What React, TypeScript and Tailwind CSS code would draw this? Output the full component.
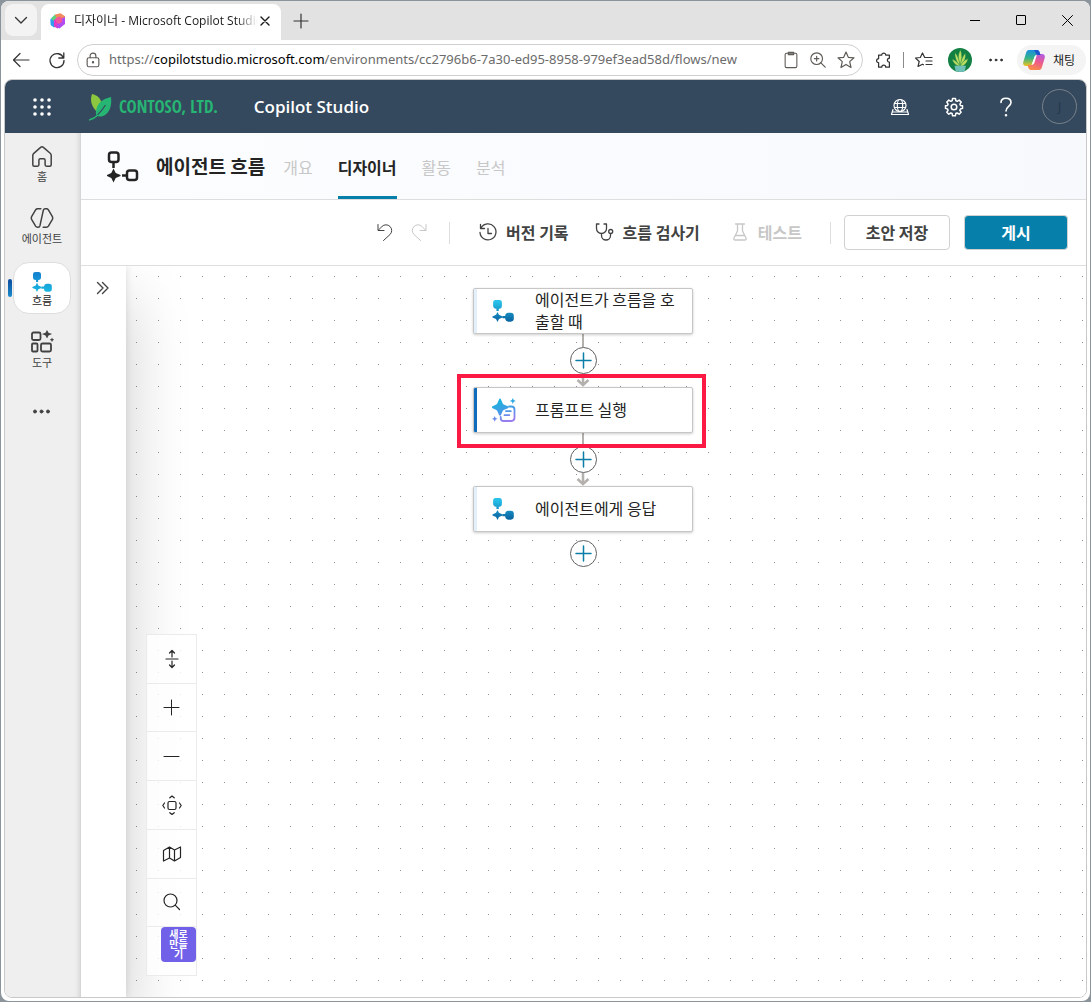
import { useState } from "react";
import type { ReactNode } from "react";

type IconProps = {
  size?: number;
  box?: string;
  width?: number;
  className?: string;
  children: ReactNode;
};

// thin outline icon wrapper
function Icon({ size = 20, box = "0 0 20 20", width = 1, className = "", children }: IconProps) {
  return (
    <svg
      width={size}
      height={size}
      viewBox={box}
      fill="none"
      stroke="currentColor"
      strokeWidth={width}
      strokeLinecap="round"
      strokeLinejoin="round"
      className={`shrink-0 ${className}`}
      aria-hidden="true"
    >
      {children}
    </svg>
  );
}

function FlowIcon({ size = 24, from, to, id }: { size?: number; from: string; to: string; id: string }) {
  return (
    <svg width={size} height={size} viewBox="0 0 24 24" className="shrink-0" aria-hidden="true">
      <defs>
        <linearGradient id={id} x1="0" y1="0" x2="0" y2="24" gradientUnits="userSpaceOnUse">
          <stop offset="0.1" stopColor={from} />
          <stop offset="0.9" stopColor={to} />
        </linearGradient>
      </defs>
      <g fill={`url(#${id})`}>
        <path d="M4 0h4a2.800 2.800 0 0 1 2.800 2.800v3.600A3.200 3.200 0 0 1 7.400 9.600V12H4.800V9.600A3.200 3.200 0 0 1 1.200 6.400V2.800A2.800 2.800 0 0 1 4 0Z" />
        <path d="M6 13l1.600 3.200 3.900 1.700v1.200l-3.900 1.600L6 24l-1.600-3.300L.500 19.100v-1.200l3.900-1.700Z" />
        <path d="M11.300 17.400h3.100A3.600 3.600 0 0 1 17.700 14H20.500a3.300 3.300 0 0 1 3.300 3.300v3a3.300 3.300 0 0 1-3.300 3.300h-2.800a3.600 3.600 0 0 1-3.300-3.600h-3.100Z" />
      </g>
    </svg>
  );
}

function PromptIcon() {
  return (
    <svg width="24" height="24" viewBox="0 0 24 24" className="shrink-0" aria-hidden="true">
      <defs>
        <linearGradient id="prompt" x1="4" y1="1" x2="12" y2="24" gradientUnits="userSpaceOnUse">
          <stop offset="0.1" stopColor="#17b3dc" />
          <stop offset="0.6" stopColor="#4a9ae8" />
          <stop offset="1" stopColor="#9a7bf0" />
        </linearGradient>
      </defs>
      <path
        d="M17 8.500h2.300a3.200 3.200 0 0 1 3.200 3.200v8.100a3.200 3.200 0 0 1-3.200 3.200H11.500a2.800 2.800 0 0 1-2.800-2.800V19M14 13.200h4.800M12.500 17.200h4.800"
        fill="none"
        stroke="url(#prompt)"
        strokeWidth="1.800"
        strokeLinecap="round"
      />
      <g fill="url(#prompt)">
        <path d="M8 .600c.500 0 .800.300 1 .800l1.700 4c.200.500.500.800 1 1l4.200 1.800c1 .400 1 1.600 0 2l-4.200 1.800c-.500.200-.800.500-1 1l-1.700 4c-.400 1-1.600 1-2 0l-1.700-4c-.200-.500-.500-.800-1-1L.600 10.200c-1-.400-1-1.600 0-2l3.700-1.800c.500-.200.800-.500 1-1l1.700-4c.200-.500.500-.800 1-.800Z" />
        <path d="M20.800 0l.900 2 2.100.900-2.100.900-.900 2.200-.900-2.200-2.100-.900 2.100-.900Z" />
        <path d="M2.700 18l.900 1.900 1.900.800-1.900 1-.900 2.100-.900-2.100-1.900-1 1.900-.800Z" />
      </g>
    </svg>
  );
}

function CopilotTabIcon() {
  return (
    <svg width="16" height="16" viewBox="0 0 16 16" className="shrink-0" aria-hidden="true">
      <path d="M.500 6L5 2l4 2-1 9L4 14.500.800 12Z" fill="#3bb8e8" />
      <path d="M5 1.500L10.500.300l4.500 3V7.500L9 10 3 6Z" fill="#f28b5b" />
      <path d="M3 7l4-2 5 2v5l-4.500 3.500L4 13.500Z" fill="#e33bc4" />
      <path d="M8 7L15 4v7L9.500 15.500 6.500 14Z" fill="#b04df0" />
      <path d="M.500 6.500L4 7.500v6.800L.800 12Z" fill="#2f9cf0" />
      <path d="M6 5l3-1.500L12 5v4L8.500 11 6 9Z" fill="#f0569c" />
      <path d="M1.500 5L5 1.800l1.500 3L3 8Z" fill="#5fd07c" />
    </svg>
  );
}

function CopilotIcon() {
  return (
    <svg width="22" height="20" viewBox="0 0 22 20" className="shrink-0" aria-hidden="true">
      <defs>
        <linearGradient id="cpA" x1="4" y1="0" x2="4" y2="16" gradientUnits="userSpaceOnUse">
          <stop offset="0" stopColor="#1a8fe0" />
          <stop offset="0.5" stopColor="#33b28a" />
          <stop offset="1" stopColor="#f0c31c" />
        </linearGradient>
        <linearGradient id="cpB" x1="18" y1="4" x2="12" y2="20" gradientUnits="userSpaceOnUse">
          <stop offset="0" stopColor="#b45be0" />
          <stop offset="0.5" stopColor="#ee5a8c" />
          <stop offset="1" stopColor="#f98a4b" />
        </linearGradient>
      </defs>
      <path d="M6 0h8c1.500 0 2.200 1 2.700 2.500L17.500 5H14c-1.500 0-2.200 1-2.700 2.500L9 14.500c-.500 1.300-1 1.500-2 1.500H3C.500 16-.300 14 .300 12L3 3C3.500 1 4.500 0 6 0Z" fill="url(#cpA)" />
      <path d="M16 20H8c-1.500 0-2.200-1-2.700-2.500L4.600 15H8c1.500 0 2.200-1 2.700-2.500L13 5.500C13.500 4.200 14 4 15 4h4c2.500 0 3.300 2 2.700 4L19 17c-.500 2-1.500 3-3 3Z" fill="url(#cpB)" />
      <path d="M11 0h3c1.500 0 2.200 1 2.700 2.500L17.500 5H14Z" fill="#1e56cf" />
      <path d="M11.300 7.500C11.800 6 12.500 5 13.800 5L11.500 12.500C11 14 9.800 15 8.500 15Z" fill="#fff" />
    </svg>
  );
}

function PlantAvatar() {
  return (
    <svg width="24" height="24" viewBox="0 0 24 24" className="shrink-0" aria-hidden="true">
      <circle cx="12" cy="12" r="12" fill="#138043" />
      <g fill="#b9dc63" stroke="#138043" strokeWidth="0.500">
        <path d="M11.300 18C9.500 11 10 6 12.500 1.500 14.500 7 14 12 12.800 18Z" />
        <path d="M11.500 18C8 13 6.500 9 7 4.500 10 8 11.500 12 12 18Z" />
        <path d="M12.200 18c.500-5 2-9.500 5.300-13 .500 5-1.200 9.500-4.500 13Z" />
        <path d="M11.500 18.500C8 17.500 5 15 4 11 8 12.500 10.500 15 12 18.500Z" />
        <path d="M12.200 18.500c1.500-4 4-6.500 8-8-1 4.500-3.500 7-7 8Z" />
      </g>
      <path d="M6.500 17.800h11.500l-1.300 5.200a12 12 0 0 1-9 0Z" fill="#6fc0b8" />
    </svg>
  );
}

function ContosoLeaf() {
  return (
    <svg width="23" height="28" viewBox="0 0 23 28" className="shrink-0" aria-hidden="true">
      <path d="M3 1c5 1 9 4 9.500 10L10 17.500 8 19C3 14 .500 8 3 1Z" fill="#8dc63f" />
      <path d="M22 4c1 8-1 16-8 19-2.500 1-5 .500-7-.500C6 12 12 6 22 4Z" fill="#27b573" />
      <path d="M0 27c7-2 12-8 16.500-15" fill="none" stroke="#34495e" strokeWidth="1.200" />
      <path d="M0 27c4-1 7-3 9-5" fill="none" stroke="#27b573" strokeWidth="1.500" />
    </svg>
  );
}

function GearIcon() {
  return (
    <Icon size={20} width={1.5}>
      <path d="M8.600 1.500h2.800l.500 2.300 1.300.500 2-1.200 2 2-1.300 2 .600 1.300 2 .400v2.600l-2.100.600-.600 1.300 1.300 1.900-2 2-2-1.200-1.300.500-.400 2.300H8.600l-.500-2.300-1.300-.500-2 1.200-2-2 1.300-1.900-.600-1.300-2-.600V8.800l2-.400.600-1.300-1.300-2 2-2 2 1.200 1.300-.500Z" />
      <circle cx="10" cy="10" r="2.800" />
    </Icon>
  );
}

// --- left rail -------------------------------------------------------------

const navItems = [
  {
    label: "홈",
    icon: (
      <Icon size={24} box="0 0 24 24" width={1.5}>
        <path d="M2.800 11.300c0-.900.400-1.500 1-2L10.600 3.400a2.100 2.100 0 0 1 2.800 0l6.800 5.900c.600.500 1 1.100 1 2v9.400c0 .900-.600 1.500-1.500 1.500h-3.200c-.900 0-1.400-.600-1.400-1.400v-4.600c0-.800-.500-1.400-1.400-1.400h-3.400c-.900 0-1.400.600-1.400 1.400v4.600c0 .800-.500 1.400-1.400 1.400H4.300c-.900 0-1.500-.600-1.500-1.500Z" />
      </Icon>
    ),
  },
  {
    label: "에이전트",
    icon: (
      <Icon size={24} box="0 0 24 24" width={1.5}>
        <path d="M10.800 2.800H7.600c-.900 0-1.500.300-2 1.100L1.600 10.700c-.500.900-.500 1.700 0 2.600l4 6.800c.500.800 1.100 1.100 2 1.100h.600c.900 0 1.500-.500 1.700-1.300L13.300 4.300c.300-1 .900-1.500 1.900-1.500h1.200c.900 0 1.500.300 2 1.100l4 6.800c.500.900.500 1.700 0 2.600l-4 6.800c-.500.800-1.100 1.100-2 1.100h-3.200" />
      </Icon>
    ),
  },
  { label: "흐름", icon: <FlowIcon id="navFlow" size={20} from="#1583cf" to="#19b4e0" /> },
  {
    label: "도구",
    icon: (
      <Icon size={24} box="0 2 24 24" width={1.8}>
        <rect x="2" y="4.500" width="8.500" height="7.500" rx="1.500" />
        <rect x="2" y="15.500" width="5.500" height="8" rx="1" />
        <rect x="11" y="15.500" width="10" height="8" rx="1.500" />
        <path
          d="M17 2l1.500 2.700 3.600 1.400-3.600 1.400L17 10.500l-1.500-3-3.600-1.400 3.600-1.400ZM22 9.500l.700 1.500 1.700.700-1.700.700-.700 1.900-.700-1.900-1.700-.700 1.700-.700Z"
          fill="currentColor"
          stroke="none"
        />
      </Icon>
    ),
  },
];

function SideNav() {
  const [active, setActive] = useState("흐름");

  return (
    <nav className="flex w-[76px] shrink-0 flex-col items-center border-r border-[#d6d6d6] bg-[#efefef] pr-px text-[#424242] shadow-[inset_-5px_0_5px_-4px_rgba(0,0,0,0.12)]">
      {navItems.map((item) => (
        <div key={item.label} className="relative flex h-[62px] w-full items-center justify-center">
          {item.label === active && (
            <span className="absolute left-[3px] h-[18px] w-1 rounded-full bg-linear-to-b from-[#0f4c9e] to-[#1a8ccb]" />
          )}
          <button
            type="button"
            onClick={() => setActive(item.label)}
            className={`flex h-[52px] w-[58px] flex-col items-center justify-center rounded-2xl border ${
              item.label === active ? "border-[#dedede] bg-white text-[#242424]" : "border-transparent"
            }`}
          >
            <span className="flex h-6 items-end">{item.icon}</span>
            <span className="text-[11px] leading-4">{item.label}</span>
          </button>
        </div>
      ))}
      <button type="button" aria-label="More" className="flex h-[62px] w-full items-center justify-center">
        <Icon size={20} className="fill-current">
          <circle cx="3" cy="9.500" r="1.500" />
          <circle cx="9.500" cy="9.500" r="1.500" />
          <circle cx="16" cy="9.500" r="1.500" />
        </Icon>
      </button>
    </nav>
  );
}

// --- flow designer ---------------------------------------------------------

function PlusButton() {
  return (
    <button
      type="button"
      aria-label="Add action"
      className="flex size-[27px] items-center justify-center rounded-full border border-[#616161] bg-white text-[#0a7ea8]"
    >
      <Icon size={17} box="0 0 17 17" width={1.5}>
        <path d="M8.500 1v15M1 8.500h15" />
      </Icon>
    </button>
  );
}

function Connector() {
  return (
    <div className="flex flex-col items-center">
      <span className="h-[13px] w-0.5 bg-[#b3b0ad]" />
      <PlusButton />
      <svg width="14" height="13" viewBox="0 0 14 13" fill="none" stroke="#b3b0ad" strokeWidth="2.500" aria-hidden="true">
        <path d="M7 0v11M1.500 6L7 11l5.500-5" />
      </svg>
    </div>
  );
}

type NodeProps = {
  title: string;
  icon: ReactNode;
  selected?: boolean;
};

function FlowNode({ title, icon, selected }: NodeProps) {
  return (
    <div className="relative">
      <button
        type="button"
        className="flex h-[46px] w-[220px] items-center overflow-hidden rounded-xs border border-[#c8c6c4] bg-white text-left shadow-[0_1px_3px_rgba(0,0,0,0.2)]"
      >
        <span className={`h-full w-[3px] shrink-0 ${selected ? "bg-[#0f6cbd]" : "bg-[#e3effb]"}`} />
        <span className="ml-[15px] flex w-[43px] shrink-0">{icon}</span>
        <span className="w-[142px] pb-0.5 leading-[22px] text-[#242424]">{title}</span>
      </button>
      {selected && (
        <span className="pointer-events-none absolute -top-[13px] -right-[13px] -bottom-[15px] -left-4 border-4 border-[#fb1a43]" />
      )}
    </div>
  );
}

const controls = [
  {
    label: "Collapse",
    icon: (
      <Icon size={20} width={1.2}>
        <path d="M4 10h12M10 8V1.500M7.500 4L10 1.500 12.500 4M10 12v6.500M7.500 16l2.500 2.500 2.500-2.500" />
      </Icon>
    ),
  },
  {
    label: "Zoom in",
    icon: (
      <Icon size={17} box="0 0 17 17">
        <path d="M8.500 1v15M1 8.500h15" />
      </Icon>
    ),
  },
  {
    label: "Zoom out",
    icon: (
      <Icon size={17} box="0 0 17 17">
        <path d="M1 8.500h15" />
      </Icon>
    ),
  },
  {
    label: "Fit view",
    icon: (
      <Icon size={20} width={1.2}>
        <rect x="6" y="6.500" width="8" height="8" rx="1.500" />
        <path d="M7.800 2.800L10 1l2.200 1.800M7.800 17.700l2.200 1.800 2.200-1.800M2.500 8L.800 10.500 2.500 13M17.500 8l1.700 2.500-1.700 2.500" />
      </Icon>
    ),
  },
  {
    label: "Minimap",
    icon: (
      <Icon size={20} width={1.2}>
        <path d="M1.500 6.500L7.500 3l5 3L18.500 3v10.500L12.500 17l-5-3-6 3ZM7.500 3v11M12.500 6v11" />
      </Icon>
    ),
  },
  {
    label: "Search",
    icon: (
      <Icon size={20} width={1.2}>
        <circle cx="8.500" cy="8.500" r="6.500" />
        <path d="M13.200 13.200L17.500 17.500" />
      </Icon>
    ),
  },
];

function Canvas() {
  return (
    <div className="relative flex-1 overflow-hidden bg-white">
      <svg className="absolute inset-0 h-full w-full" aria-hidden="true">
        <pattern id="dots" width="22" height="22" patternUnits="userSpaceOnUse">
          <rect x="11" y="10" width="1" height="1" fill="#91919a" />
        </pattern>
        <rect width="100%" height="100%" fill="url(#dots)" />
      </svg>

      {/* collapsed side panel lies over the canvas */}
      <div className="absolute inset-y-0 left-0 flex w-[45px] justify-center bg-white pt-3 pr-0.5 shadow-[0_0_8px_rgba(0,0,0,0.12),0_32px_64px_rgba(0,0,0,0.22)]">
        <button type="button" aria-label="Expand panel" className="h-5 text-[#424242]">
          <Icon size={20} width={1.4}>
            <path d="M4.500 4.500L10 10l-5.500 5.500M9.500 4.500L15 10l-5.500 5.500" />
          </Icon>
        </button>
      </div>

      <div className="relative flex flex-col items-center pt-[22px] pr-px">
        <FlowNode title="에이전트가 흐름을 호출할 때" icon={<FlowIcon id="flowA" size={22} from="#27c0e8" to="#0b6aa6" />} />
        <Connector />
        <div className="z-10">
          <FlowNode title="프롬프트 실행" icon={<PromptIcon />} selected />
        </div>
        <Connector />
        <FlowNode title="에이전트에게 응답" icon={<FlowIcon id="flowB" size={22} from="#27c0e8" to="#0b6aa6" />} />
        <div className="mt-2">
          <PlusButton />
        </div>
      </div>

      <div className="absolute bottom-[21px] left-[65px] flex h-[342px] w-[51px] flex-col border border-[#ebebeb] bg-white/80 text-[#242424]">
        {controls.map((c) => (
          <button
            key={c.label}
            type="button"
            aria-label={c.label}
            className="flex w-full flex-1 items-center justify-center border-b border-[#ebebeb]"
          >
            {c.icon}
          </button>
        ))}
        <div className="flex flex-1 justify-end">
          <button
            type="button"
            className="h-[35px] w-[35px] rounded-sm bg-[#7160e8] px-1 pb-0.5 text-center text-[10px] leading-[10px] font-bold text-white"
          >
            새로 만들기
          </button>
        </div>
      </div>
    </div>
  );
}

function CommandBar() {
  return (
    <div className="flex h-[66px] items-center justify-end border-b border-[#dedede] bg-white pr-[18px] font-bold text-[#424242]">
      <button type="button" aria-label="Undo" className="mr-3.5">
        <Icon size={20}>
          <path d="M3 1.500v6h6M3.300 7.200L7 3.500a5.600 5.600 0 0 1 8 0 5.600 5.600 0 0 1 0 8L8.500 17.500" />
        </Icon>
      </button>
      <button type="button" aria-label="Redo" disabled className="text-[#c7c7c7]">
        <Icon size={20}>
          <path d="M17 1.500v6h-6M16.700 7.200L13 3.500a5.600 5.600 0 0 0-8 0 5.600 5.600 0 0 0 0 8l6.500 6" />
        </Icon>
      </button>
      <span className="mx-5 h-[22px] w-px bg-[#dedede]" />
      <button type="button" className="mx-2 flex items-center gap-2 pb-0.5">
        <Icon size={20} width={1.3}>
          <path d="M3 6a8 8 0 1 1-1 4.500M2.500 2.500v4h4M10 6.500v5h3.500" />
        </Icon>
        버전 기록
      </button>
      <button type="button" className="mr-[22px] ml-[18px] flex items-center gap-2 pb-0.5">
        <Icon size={20} width={1.3}>
          <path d="M4 2H1.500v4.500a5 5 0 0 0 10 0V2H9M6.500 11.500v2a4.500 4.500 0 0 0 9 0v-1.800" />
          <circle cx="15.700" cy="9.500" r="2" />
        </Icon>
        흐름 검사기
      </button>
      <button type="button" disabled className="mx-2 flex items-center gap-2 pb-0.5 text-[#c7c7c7]">
        <Icon size={20} width={1.3}>
          <path d="M5.500 2h9M7.500 2v7L4 16c-.500 1.200 0 2 1.200 2h9.600c1.200 0 1.700-.800 1.200-2L12.500 9V2M5.500 13.500h9" />
        </Icon>
        테스트
      </button>
      <span className="mr-[13px] ml-5 h-[22px] w-px bg-[#dedede]" />
      <button type="button" className="h-[35px] w-[106px] rounded-sm border border-[#d1d1d1] bg-white pb-0.5">
        초안 저장
      </button>
      <button type="button" className="ml-3.5 h-[35px] w-[104px] rounded-sm border border-[#d1d1d1] bg-[#077fab] pb-0.5 text-white">
        게시
      </button>
    </div>
  );
}

const tabs = ["개요", "디자이너", "활동", "분석"];

function TitleBar() {
  return (
    <div className="flex h-[67px] items-center border-b border-[#dedede] bg-linear-to-r from-[#fcfdff] to-[#f7f9fc] pl-[26px]">
      <svg width="32" height="32" viewBox="0 0 32 32" fill="none" stroke="#242424" strokeWidth="2.500" className="mt-0.5 shrink-0" aria-hidden="true">
        <rect x="2" y="1.500" width="9.500" height="9.500" rx="2.500" />
        <path d="M6.500 11.500V17M15 24.500h5" />
        <rect x="20" y="19.500" width="10" height="9.500" rx="2.500" />
        <path d="M6.500 17.500l2.200 4.600 4.800 2v1l-4.800 2L6.500 31.500l-2.200-4.400L0 25.100v-1l4.300-2Z" fill="#242424" stroke="none" />
      </svg>
      <h1 className="ml-[17px] text-[19px] leading-7 font-bold text-[#242424]">에이전트 흐름</h1>
      <div className="ml-[18px] flex gap-[25px] self-stretch">
        {tabs.map((tab) => (
          <button
            key={tab}
            type="button"
            disabled={tab !== "디자이너"}
            className={`flex items-center border-b-3 pt-[5px] ${
              tab === "디자이너"
                ? "border-b-[#077fab] font-bold text-[#242424]"
                : "border-b-transparent text-[#c7c7c7]"
            }`}
          >
            {tab}
          </button>
        ))}
      </div>
    </div>
  );
}

function AppHeader() {
  return (
    <header className="flex h-[53px] items-center bg-[#34495e] pr-[9px] text-white">
      <button type="button" aria-label="App launcher" className="ml-7">
        <svg width="18" height="18" viewBox="0 0 18 18" fill="currentColor" aria-hidden="true">
          {[2, 9, 16].map((y) =>
            [2, 9, 16].map((x) => <circle key={`${x}-${y}`} cx={x} cy={y} r="1.800" />)
          )}
        </svg>
      </button>
      <a href="#" className="ml-[38px] flex items-center gap-[7px]">
        <ContosoLeaf />
        <span className="font-['Open_Sans_Condensed','Roboto_Condensed','DejaVu_Sans_Condensed','Liberation_Sans',sans-serif] text-[17px] font-black text-[#27b573]">
          CONTOSO, LTD.
        </span>
      </a>
      <a href="#" className="ml-9 font-['Open_Sans','Noto_Sans',sans-serif] text-[17px] font-semibold">
        Copilot Studio
      </a>
      <div className="ml-auto flex items-center">
        <button type="button" aria-label="Environment" className="mr-[34px]">
          <Icon size={20} width={1.2}>
            <circle cx="10" cy="8.500" r="6" />
            <ellipse cx="10" cy="8.500" rx="2.700" ry="6" />
            <path d="M4.500 6.500h11M4.500 10.500h11M3 12.500L1.500 17.500h17L17 12.500M3 15h14" />
          </Icon>
        </button>
        <button type="button" aria-label="Settings" className="mr-[32px]">
          <GearIcon />
        </button>
        <button type="button" aria-label="Help" className="mr-[26px]">
          <Icon size={20} width={1.6}>
            <path d="M5 5.500C5 3 7 1.200 10 1.200s5 1.800 5 4.300c0 4-5 4-5 8.500" />
            <circle cx="10" cy="18.300" r="0.500" fill="currentColor" />
          </Icon>
        </button>
        <button
          type="button"
          className="size-[35px] rounded-full border border-[#78818b] font-['Open_Sans','Noto_Sans',sans-serif] text-xs text-[#24384c]"
        >
          J
        </button>
      </div>
    </header>
  );
}

// --- browser chrome --------------------------------------------------------

function BrowserTabs() {
  return (
    <div className="flex h-[39px] items-start bg-[#e2e2e2] pl-1">
      <button type="button" aria-label="Tab actions" className="mt-[3px] flex size-8 items-center justify-center rounded-lg bg-[#f3f3f3] text-[#333]">
        <Icon size={14} box="0 0 14 14" width={1.3}>
          <path d="M1.500 4.500L7 10l5.500-5.500" />
        </Icon>
      </button>
      <div className="mt-[3px] ml-1 flex h-9 w-60 items-center rounded-t-lg bg-white pb-0.5 pl-[9px] font-['Open_Sans','Noto_Sans_CJK_KR',sans-serif] text-xs text-[#1a1a1a]">
        <CopilotTabIcon />
        <span className="ml-2 w-[184px] overflow-hidden mask-r-from-88% whitespace-nowrap">디자이너 - Microsoft Copilot Studio</span>
        <button type="button" aria-label="Close tab" className="ml-0.5">
          <Icon size={10} box="0 0 10 10" width={1.4}>
            <path d="M1 1l8 8M9 1L1 9" />
          </Icon>
        </button>
      </div>
      <button type="button" aria-label="New tab" className="mt-3 ml-3 text-[#333]">
        <Icon size={16} box="0 0 16 16" width={1.2}>
          <path d="M8 1v14M1 8h14" />
        </Icon>
      </button>
      <div className="ml-auto flex h-[38px] text-black">
        <button type="button" aria-label="Minimize" className="flex w-[46px] items-center justify-center">
          <span className="h-px w-2.5 bg-black" />
        </button>
        <button type="button" aria-label="Maximize" className="flex w-[46px] items-center justify-center">
          <span className="size-2.5 rounded-[1px] border border-black" />
        </button>
        <button type="button" aria-label="Close" className="flex w-[46px] items-center justify-center">
          <Icon size={11} box="0 0 11 11">
            <path d="M.500.500l10 10M10.500.500l-10 10" />
          </Icon>
        </button>
      </div>
    </div>
  );
}

function AddressBar() {
  return (
    <div className="flex h-[39px] items-center bg-white pr-1 pl-2.5 text-[#333]">
      <button type="button" aria-label="Back">
        <Icon size={20} width={1.2}>
          <path d="M2.500 10H18M9 3.500L2.500 10 9 16.500" />
        </Icon>
      </button>
      <button type="button" aria-label="Refresh" className="ml-4">
        <Icon size={20} width={1.3}>
          <path d="M16.500 8A7 7 0 1 0 17 10.500M16.800 3v5h-5" />
        </Icon>
      </button>
      <div className="ml-2.5 flex h-8 min-w-0 flex-1 items-center rounded-full border border-[#cfcfcf] px-1.5">
        <Icon size={18} box="0 0 20 20" width={1.3} className="text-[#5f5b57]">
          <rect x="3.500" y="7.500" width="13" height="10" rx="2" />
          <path d="M6.800 7.500V5.500a3.200 3.200 0 0 1 6.400 0v2" />
          <circle cx="10" cy="12.500" r="0.700" fill="currentColor" />
        </Icon>
        <a href="#" className="ml-[7px] min-w-0 flex-1 truncate font-['Noto_Sans','Open_Sans',sans-serif] text-[13px] text-[#6b6b6b]">
          https://<span className="text-black">copilotstudio.microsoft.com</span>
          /environments/cc2796b6-7a30-ed95-8958-979ef3ead58d/flows/new
        </a>
        <div className="flex items-center gap-[9px] text-[#5f5b57]">
          <Icon size={18} box="0 0 20 20" width={1.2}>
            <rect x="3.500" y="2.500" width="13" height="16" rx="1.500" />
            <path d="M7 2.500V1.500h6v2.500H7Z" />
          </Icon>
          <Icon size={18} width={1.3}>
            <circle cx="8.500" cy="8.500" r="6.500" />
            <path d="M8.500 6v5M6 8.500h5M13.200 13.200L18 18" />
          </Icon>
          <Icon size={20} width={1.2}>
            <path d="M10 2l2.300 5.300 5.700.500-4.300 3.800 1.300 5.900-5-3.100-5 3.100 1.300-5.900L2 7.800l5.700-.500Z" />
          </Icon>
        </div>
      </div>
      <button type="button" aria-label="Extensions" className="ml-3">
        <Icon size={18} width={1.4}>
          <path d="M4 4.500h3.500a2.200 2.200 0 1 1 4.400 0H16V8a2.200 2.200 0 1 0 0 4.400V18H11.900a2.200 2.200 0 0 0-4.400 0H4v-5a2.200 2.200 0 1 1 0-4.400Z" />
        </Icon>
      </button>
      <span className="mx-2.5 h-4 w-px bg-[#8a8a8a]" />
      <button type="button" aria-label="Favorites">
        <Icon size={20} width={1.2}>
          <path d="M13 7.500H10.700L8.500 3 6.300 7.500 1.500 8l3.700 3.500L4 16.500l4.500-2.300 1 .600M12 7.500h6M12 11h6M12 14.500h6" />
        </Icon>
      </button>
      <button type="button" aria-label="Profile" className="ml-3.5">
        <PlantAvatar />
      </button>
      <button type="button" aria-label="Menu" className="ml-3.5">
        <Icon size={20} className="fill-current">
          <circle cx="4.500" cy="10" r="0.900" />
          <circle cx="10" cy="10" r="0.900" />
          <circle cx="15.500" cy="10" r="0.900" />
        </Icon>
      </button>
      <button type="button" className="ml-[11px] flex h-[30px] w-[69px] items-center gap-2 rounded-full bg-[#f4f4f4] pl-1.5 text-xs text-[#1a1a1a]">
        <CopilotIcon />
        채팅
      </button>
    </div>
  );
}

export default function App() {
  return (
    <div className="flex min-h-screen bg-[#8b939b] p-px font-['Noto_Sans_CJK_KR','Open_Sans',sans-serif] text-base">
      <div className="flex min-w-0 flex-1 flex-col overflow-hidden rounded-lg bg-white">
        <BrowserTabs />
        <AddressBar />
        <div className="mx-[3px] mb-[3px] flex flex-1 flex-col overflow-hidden rounded-lg border border-[#c9c9c9]">
          <AppHeader />
          <div className="flex flex-1">
            <SideNav />
            <main className="flex min-w-0 flex-1 flex-col">
              <TitleBar />
              <CommandBar />
              <Canvas />
            </main>
          </div>
        </div>
      </div>
    </div>
  );
}
